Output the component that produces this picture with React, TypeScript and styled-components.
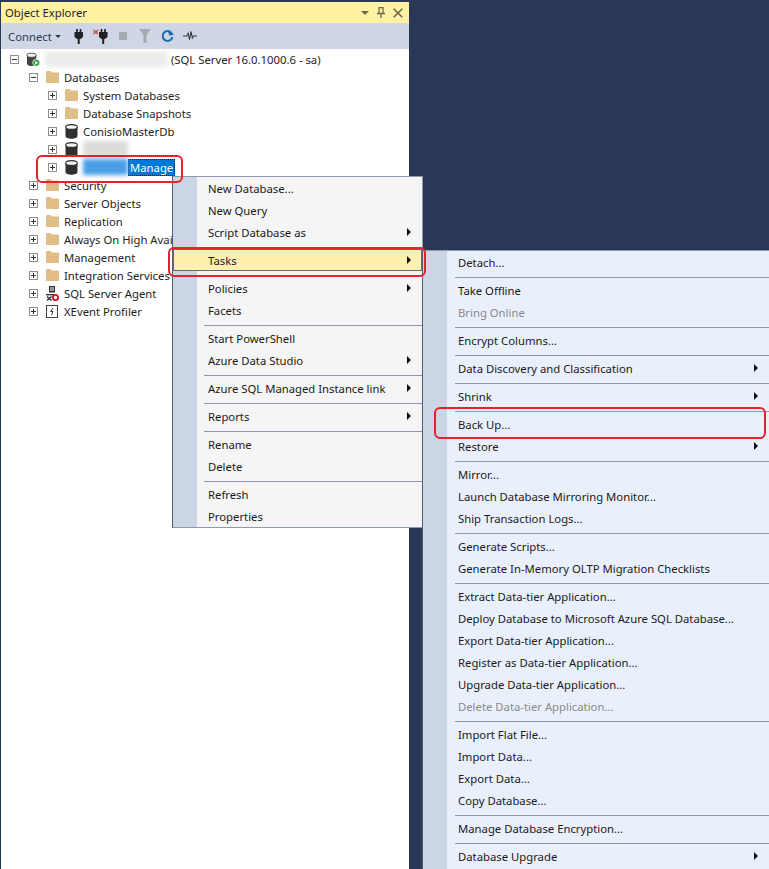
import React from 'react';
import styled, { createGlobalStyle } from 'styled-components';

const GlobalStyle = createGlobalStyle`
  html, body {
    margin: 0;
    height: 100%;
    background: #293955;
    overflow: hidden;
  }
  body {
    font-family: "Noto Sans", "Open Sans", sans-serif;
    font-size: 11.3px;
    color: #1e1e1e;
  }
`;

const Page = styled.div`
  position: relative;
  width: 769px;
  height: 869px;
  padding: 2px 0 0 1px;
  box-sizing: border-box;
  overflow: hidden;
`;

const Panel = styled.div`
  width: 408px;
  height: 867px;
  display: flex;
  flex-direction: column;
  background: #fff;
`;

const TitleBar = styled.div`
  height: 21px;
  flex: none;
  display: flex;
  align-items: center;
  justify-content: space-between;
  padding: 0 6px 0 4px;
  background: #fff2a2;
  color: #1e1e1e;
`;

const TitleIcons = styled.div`
  display: flex;
  align-items: center;
  gap: 8px;
  color: #6e6845;
`;

const Toolbar = styled.div`
  height: 26px;
  flex: none;
  display: flex;
  align-items: center;
  padding-left: 7px;
  background: #cfd6e5;
`;

const ConnectLabel = styled.span`
  width: 47px;
  color: #2a3a55;
`;

const ToolIcon = styled.svg<{ $gap?: number }>`
  flex: none;
  margin-left: ${(p) => p.$gap ?? 0}px;
`;

const Tree = styled.div`
  flex: 1;
  padding-top: 1px;
`;

const Row = styled.div<{ $level: number }>`
  height: 18px;
  display: flex;
  align-items: center;
  padding-left: ${(p) => 9 + p.$level * 19}px;
  white-space: nowrap;
`;

const Expander = styled.span`
  width: 9px;
  height: 9px;
  flex: none;
  position: relative;
  border: 1px solid #8e8e8e;
  box-sizing: border-box;
  background: #fff;
  &::before {
    content: '';
    position: absolute;
    left: 1px;
    right: 1px;
    top: 3px;
    height: 1px;
    background: #333;
  }
`;

const PlusExpander = styled(Expander)`
  &::after {
    content: '';
    position: absolute;
    top: 1px;
    bottom: 1px;
    left: 3px;
    width: 1px;
    background: #333;
  }
`;

const IconSlot = styled.span`
  width: 14px;
  height: 16px;
  flex: none;
  margin: 0 5px 0 7px;
  display: flex;
  align-items: center;
  justify-content: center;
`;

const Blurred = styled.span<{ $width: number; $tone: string }>`
  display: inline-block;
  width: ${(p) => p.$width}px;
  height: 16px;
  flex: none;
  background: ${(p) => p.$tone};
  filter: blur(2px);
`;

const Selected = styled.span`
  background: #0078d7;
  color: #fff;
  outline: 1px dotted #222;
  outline-offset: -1px;
  padding: 0 2px;
  line-height: 17px;
`;

const Menu = styled.div<{ $left: number; $top: number; $width: number; $bg: string; $tail?: number }>`
  position: absolute;
  left: ${(p) => p.$left}px;
  top: ${(p) => p.$top}px;
  width: ${(p) => p.$width}px;
  box-sizing: border-box;
  padding-bottom: ${(p) => p.$tail ?? 0}px;
  background: linear-gradient(to right, #ccd5e4 0, #ccd5e4 24px, ${(p) => p.$bg} 24px);
  border-left: 1px solid #4f5d75;
  border-top: 1px solid #8d99ae;
  border-right: 1px solid #8d99ae;
  border-bottom: 1px solid #8d99ae;
`;

const Item = styled.div<{ $active?: boolean; $disabled?: boolean; $end: number }>`
  height: 22px;
  display: flex;
  align-items: center;
  justify-content: space-between;
  box-sizing: border-box;
  padding: 0 ${(p) => p.$end}px 0 35px;
  color: ${(p) => (p.$disabled ? '#8a8a8a' : '#1a1a1a')};
  white-space: nowrap;
  ${(p) =>
    p.$active &&
    `
    background: #fff0b0;
    outline: 1px solid #5d6b80;
    outline-offset: -1px;
  `}
`;

const Arrow = styled.span`
  width: 0;
  height: 0;
  border-left: 4px solid #111;
  border-top: 4px solid transparent;
  border-bottom: 4px solid transparent;
`;

const Separator = styled.div<{ $inset: number }>`
  height: 1px;
  margin: 4px 0 1px ${(p) => p.$inset}px;
  background: #8f98a6;
`;

const Callout = styled.div<{ $left: number; $top: number; $width: number; $height: number }>`
  position: absolute;
  left: ${(p) => p.$left}px;
  top: ${(p) => p.$top}px;
  width: ${(p) => p.$width}px;
  height: ${(p) => p.$height}px;
  box-sizing: border-box;
  border: 2px solid #e4222b;
  border-radius: 6px;
  pointer-events: none;
`;

const Folder = () => (
  <svg width="13" height="12" viewBox="0 0 13 12">
    <path d="M0 1.5 C0 .6 .5 0 1.5 0 H4.5 L6 1.5 H12 C12.6 1.5 13 2 13 2.5 V11 C13 11.6 12.6 12 12 12 H1 C.4 12 0 11.6 0 11 Z" fill="#e0bd86" />
  </svg>
);

const Cylinder = () => (
  <svg width="13" height="15" viewBox="0 0 13 15">
    <path d="M.5 3 V12 C.5 13.7 3.5 14.8 6.5 14.8 S12.5 13.7 12.5 12 V3 Z" fill="#2f2f2f" />
    <ellipse cx="6.5" cy="3" rx="5.8" ry="2.4" fill="#f4f4f4" stroke="#2f2f2f" strokeWidth="1.1" />
  </svg>
);

const ServerIcon = () => (
  <svg width="15" height="15" viewBox="0 0 15 15">
    <path d="M1 3 V12 C1 13.3 3.2 14.5 6 14.5 S11 13.3 11 12 V3 Z" fill="#444" />
    <ellipse cx="6" cy="3" rx="5" ry="2.2" fill="#f4f4f4" stroke="#444" />
    <circle cx="11" cy="11" r="3.8" fill="#2e9e3f" stroke="#fff" strokeWidth=".8" />
    <path d="M9.8 9 L13 11 L9.8 13 Z" fill="#fff" />
  </svg>
);

const AgentIcon = () => (
  <svg width="13" height="15" viewBox="0 0 13 15">
    <rect x="3" y="0" width="6" height="6.5" fill="#333" />
    <path d="M4 2 H8 M4 4 H8" stroke="#fff" />
    <rect x="0" y="8" width="8" height="1.4" fill="#333" />
    <path d="M1 10.5 L5.5 14.5 M5.5 10.5 L1 14.5" stroke="#333" strokeWidth="1.4" />
    <circle cx="9.5" cy="11.5" r="2.6" fill="#fff" stroke="#d0101c" strokeWidth="1.8" />
  </svg>
);

const XEventIcon = () => (
  <svg width="12" height="13" viewBox="0 0 12 13">
    <rect x=".5" y=".5" width="11" height="12" fill="#fff" stroke="#444" />
    <path d="M7 3 L4.5 6.5 H7 L5.5 10" fill="none" stroke="#333" />
  </svg>
);

const Plug = () => (
  <>
    <path d="M3 0 V3 M6.5 0 V3" stroke="#222" strokeWidth="1.7" />
    <path d="M.5 3 H9 V8 L6.5 10 H3 L.5 8 Z" fill="#222" />
    <rect x="3.7" y="10" width="2" height="5" fill="#222" />
  </>
);

type MenuEntry = string | { label: string; arrow?: boolean; active?: boolean; disabled?: boolean };

const SEP = '-';

const contextMenu: MenuEntry[] = [
  'New Database...',
  'New Query',
  { label: 'Script Database as', arrow: true },
  SEP,
  { label: 'Tasks', arrow: true, active: true },
  SEP,
  { label: 'Policies', arrow: true },
  'Facets',
  SEP,
  'Start PowerShell',
  { label: 'Azure Data Studio', arrow: true },
  SEP,
  { label: 'Azure SQL Managed Instance link', arrow: true },
  SEP,
  { label: 'Reports', arrow: true },
  SEP,
  'Rename',
  'Delete',
  SEP,
  'Refresh',
  'Properties',
];

const tasksMenu: MenuEntry[] = [
  'Detach...',
  SEP,
  'Take Offline',
  { label: 'Bring Online', disabled: true },
  SEP,
  'Encrypt Columns...',
  SEP,
  { label: 'Data Discovery and Classification', arrow: true },
  SEP,
  { label: 'Shrink', arrow: true },
  SEP,
  'Back Up...',
  { label: 'Restore', arrow: true },
  SEP,
  'Mirror...',
  'Launch Database Mirroring Monitor...',
  'Ship Transaction Logs...',
  SEP,
  'Generate Scripts...',
  'Generate In-Memory OLTP Migration Checklists',
  SEP,
  'Extract Data-tier Application...',
  'Deploy Database to Microsoft Azure SQL Database...',
  'Export Data-tier Application...',
  'Register as Data-tier Application...',
  'Upgrade Data-tier Application...',
  { label: 'Delete Data-tier Application...', disabled: true },
  SEP,
  'Import Flat File...',
  'Import Data...',
  'Export Data...',
  'Copy Database...',
  SEP,
  'Manage Database Encryption...',
  SEP,
  { label: 'Database Upgrade', arrow: true },
];

const treeNodes = [
  { icon: <Folder />, label: 'System Databases' },
  { icon: <Folder />, label: 'Database Snapshots' },
  { icon: <Cylinder />, label: 'ConisioMasterDb' },
];

const lowerNodes = [
  { icon: <Folder />, label: 'Security' },
  { icon: <Folder />, label: 'Server Objects' },
  { icon: <Folder />, label: 'Replication' },
  { icon: <Folder />, label: 'Always On High Availability' },
  { icon: <Folder />, label: 'Management' },
  { icon: <Folder />, label: 'Integration Services' },
  { icon: <AgentIcon />, label: 'SQL Server Agent' },
  { icon: <XEventIcon />, label: 'XEvent Profiler' },
];

function renderMenu(entries: MenuEntry[], inset: number, end: number) {
  return entries.map((entry, i) => {
    if (entry === SEP) return <Separator key={i} $inset={inset} />;
    const item = typeof entry === 'string' ? { label: entry } : entry;
    return (
      <Item key={i} $active={item.active} $disabled={item.disabled} $end={end}>
        {item.label}
        {item.arrow && <Arrow />}
      </Item>
    );
  });
}

function App() {
  return (
    <Page>
      <GlobalStyle />
      <Panel>
        <TitleBar>
          Object Explorer
          <TitleIcons>
            <svg width="8" height="4" viewBox="0 0 8 4">
              <path d="M0 0 H8 L4 4 Z" fill="currentColor" />
            </svg>
            <svg width="8" height="11" viewBox="0 0 8 11">
              <path d="M1.5 .5 H6.5 M2 .5 V6 M6 .5 V6 M0 6.5 H8 M4 7 V11" fill="none" stroke="currentColor" strokeWidth="1.3" />
            </svg>
            <svg width="10" height="10" viewBox="0 0 10 10">
              <path d="M.7 .7 L9.3 9.3 M9.3 .7 L.7 9.3" stroke="currentColor" strokeWidth="1.6" />
            </svg>
          </TitleIcons>
        </TitleBar>
        <Toolbar>
          <ConnectLabel>Connect</ConnectLabel>
          <ToolIcon width="6" height="3" viewBox="0 0 6 3">
            <path d="M0 0 H6 L3 3 Z" fill="#2a3a55" />
          </ToolIcon>
          <ToolIcon $gap={13} width="10" height="15" viewBox="0 0 10 15">
            <Plug />
          </ToolIcon>
          <ToolIcon $gap={9} width="15" height="15" viewBox="-5.5 0 15 15">
            <Plug />
            <path d="M-5 1 L-.5 5 M-.5 1 L-5 5" stroke="#d23a2e" strokeWidth="1.2" />
          </ToolIcon>
          <ToolIcon $gap={11} width="8" height="8" viewBox="0 0 8 8">
            <rect width="8" height="8" fill="#a5a9b1" />
          </ToolIcon>
          <ToolIcon $gap={12} width="12" height="14" viewBox="0 0 12 14">
            <path d="M0 0 H12 L7.5 6 V14 H4.5 V6 Z" fill="#a5a9b1" />
          </ToolIcon>
          <ToolIcon $gap={10} width="13" height="14" viewBox="0 0 14 14">
            <path d="M11.5 4 A5.3 5.3 0 1 0 12.3 8" fill="none" stroke="#1c6fb3" strokeWidth="2.2" />
            <path d="M8 0 V6 H13.5 Z" fill="#1c6fb3" transform="rotate(-15 11 3)" />
          </ToolIcon>
          <ToolIcon $gap={9} width="14" height="12" viewBox="0 0 15 12">
            <path d="M0 6 H4 L5.5 3 L7 10 L8.5 1 L10 8 L11 6 H15" fill="none" stroke="#333" strokeWidth="1.1" />
          </ToolIcon>
        </Toolbar>
        <Tree>
          <Row $level={0}>
            <Expander />
            <IconSlot>
              <ServerIcon />
            </IconSlot>
            <Blurred $width={123} $tone="#ececec" />
            &nbsp;(SQL Server 16.0.1000.6 - sa)
          </Row>
          <Row $level={1}>
            <Expander />
            <IconSlot>
              <Folder />
            </IconSlot>
            Databases
          </Row>
          {treeNodes.map((node) => (
            <Row key={node.label} $level={2}>
              <PlusExpander />
              <IconSlot>{node.icon}</IconSlot>
              {node.label}
            </Row>
          ))}
          <Row $level={2}>
            <PlusExpander />
            <IconSlot>
              <Cylinder />
            </IconSlot>
            <Blurred $width={45} $tone="#dcdcdc" />
          </Row>
          <Row $level={2}>
            <PlusExpander />
            <IconSlot>
              <Cylinder />
            </IconSlot>
            <Blurred $width={45} $tone="#4a9fe6" />
            <Selected>Manage</Selected>
          </Row>
          {lowerNodes.map((node) => (
            <Row key={node.label} $level={1}>
              <PlusExpander />
              <IconSlot>{node.icon}</IconSlot>
              {node.label}
            </Row>
          ))}
        </Tree>
      </Panel>
      <Menu $left={172} $top={176} $width={251} $bg="#f5f5f5">
        {renderMenu(contextMenu, 31, 11)}
      </Menu>
      <Menu $left={422} $top={250} $width={360} $bg="#e9f0fc" $tail={6}>
        {renderMenu(tasksMenu, 32, 23)}
      </Menu>
      <Callout $left={36} $top={155} $width={147} $height={28} />
      <Callout $left={168} $top={247} $width={258} $height={30} />
      <Callout $left={434} $top={407} $width={332} $height={32} />
    </Page>
  );
}

export default App;
